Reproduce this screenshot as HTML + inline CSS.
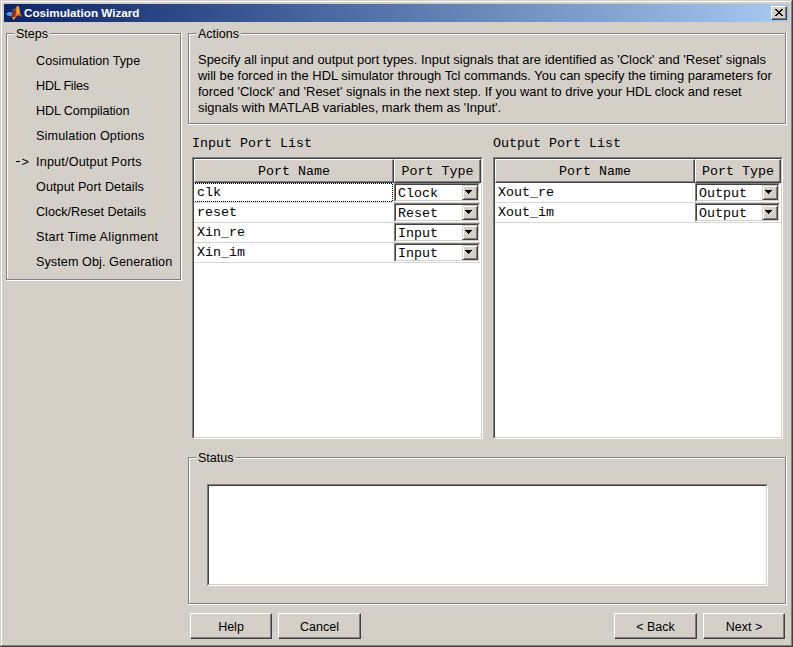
<!DOCTYPE html>
<html><head><meta charset="utf-8">
<style>
*{box-sizing:border-box;margin:0;padding:0}
html,body{width:793px;height:647px;overflow:hidden;background:#d4d0c8}
body{position:relative;font-family:"Liberation Sans",sans-serif;color:#000}
.a{position:absolute}
.t{position:absolute;white-space:pre;line-height:16px}
.m{font-family:"Liberation Mono",monospace}
.etchG{position:absolute;border:1px solid #808080;box-shadow:inset 1px 1px 0 #fff}
.etchW{position:absolute;border:1px solid #fff}
.lg{position:absolute;background:#d4d0c8;white-space:pre;font-size:12.5px;line-height:16px}
.btn{position:absolute;padding-top:2px;background:#d4d0c8;border-top:1px solid #fff;border-left:1px solid #fff;border-right:1px solid #404040;border-bottom:1px solid #404040;box-shadow:inset -1px -1px 0 #808080;font-size:12.5px;text-align:center;line-height:16px}
.sunk{position:absolute;background:#fff;border-top:1px solid #808080;border-left:1px solid #808080;border-right:1px solid #fff;border-bottom:1px solid #fff}
.sunk2{position:absolute;inset:0;border-top:1px solid #404040;border-left:1px solid #404040;border-right:1px solid #d4d0c8;border-bottom:1px solid #d4d0c8}
</style></head><body>
<!-- window frame -->
<div class="a" style="left:1px;top:1px;width:790px;height:1px;background:#fff"></div>
<div class="a" style="left:1px;top:1px;width:1px;height:644px;background:#fff"></div>
<div class="a" style="left:791px;top:1px;width:1px;height:645px;background:#808080"></div>
<div class="a" style="left:1px;top:645px;width:791px;height:1px;background:#808080"></div>
<div class="a" style="left:792px;top:0;width:1px;height:647px;background:#404040"></div>
<div class="a" style="left:0;top:646px;width:793px;height:1px;background:#404040"></div>

<!-- title bar -->
<div class="a" style="left:4px;top:4px;width:785px;height:18px;background:linear-gradient(to right,#0a246a,#a6caf0)"></div>
<svg class="a" style="left:4px;top:4px" width="20" height="18" viewBox="0 0 20 18">
  <polygon points="2,10 4.5,8 8,8.2 8.5,11.5 6,12.2 3.5,11.5" fill="#4a9ae0"/>
  <polygon points="7.5,6.5 9.5,4.2 10.5,5.5 9,7.5" fill="#1f6cb8" opacity="0.8"/>
  <polygon points="13,2 15,2.5 16.5,10 18.2,13 15,11.2 13,12 9.8,15.8 7.5,12 9.5,7.5 11.5,4" fill="#e06a1a"/>
  <polygon points="9.5,7.5 11.5,4 12,9 10.5,13 9.5,15.5 7.5,12" fill="#9a2210"/>
  <polygon points="13,2 15,2.5 15.5,9.5 13,11.5 12.5,5" fill="#f0a030"/>
  <polygon points="8.5,13.2 10.8,13.3 9.5,15.9" fill="#ffcc30"/>
</svg>
<div class="t" style="left:24px;top:4px;font-weight:bold;font-size:11.7px;color:#fff;line-height:18px">Cosimulation Wizard</div>
<!-- close button -->
<div class="a" style="left:771px;top:6px;width:16px;height:14px;background:#d4d0c8;border-top:1px solid #fff;border-left:1px solid #fff;border-right:1px solid #404040;border-bottom:1px solid #404040;box-shadow:inset -1px -1px 0 #808080"></div>
<svg class="a" style="left:771px;top:6px" width="16" height="14" viewBox="0 0 16 14">
  <path d="M4,3h1v1h-1zM5,3h1v1h-1zM10,3h1v1h-1zM11,3h1v1h-1zM5,4h1v1h-1zM6,4h1v1h-1zM9,4h1v1h-1zM10,4h1v1h-1zM6,5h1v1h-1zM7,5h1v1h-1zM8,5h1v1h-1zM9,5h1v1h-1zM7,6h1v1h-1zM8,6h1v1h-1zM6,7h1v1h-1zM7,7h1v1h-1zM8,7h1v1h-1zM9,7h1v1h-1zM5,8h1v1h-1zM6,8h1v1h-1zM9,8h1v1h-1zM10,8h1v1h-1zM4,9h1v1h-1zM5,9h1v1h-1zM10,9h1v1h-1zM11,9h1v1h-1z" fill="#000"/>
</svg>

<!-- Steps group -->
<div class="etchW" style="left:6px;top:33px;width:176px;height:248px"></div>
<div class="etchG" style="left:6px;top:33px;width:175px;height:247px"></div>
<div class="lg" style="left:14px;top:26px;padding:0 2px 0 2px">Steps</div>
<div class="t" style="left:36px;top:53px;font-size:12.6px;letter-spacing:0.050px">Cosimulation Type</div>
<div class="t" style="left:36px;top:78px;font-size:12.6px;letter-spacing:-0.212px">HDL Files</div>
<div class="t" style="left:36px;top:103px;font-size:12.6px;letter-spacing:-0.093px">HDL Compilation</div>
<div class="t" style="left:36px;top:128px;font-size:12.6px;letter-spacing:0.147px">Simulation Options</div>
<div class="a" style="left:16px;top:161px;width:4px;height:1px;background:#000"></div>
<div class="t" style="left:21.5px;top:154px;font-size:12.6px">&gt;</div>
<div class="t" style="left:36px;top:154px;font-size:12.6px;letter-spacing:0.194px">Input/Output Ports</div>
<div class="t" style="left:36px;top:179px;font-size:12.6px;letter-spacing:0.083px">Output Port Details</div>
<div class="t" style="left:36px;top:204px;font-size:12.6px;letter-spacing:0.006px">Clock/Reset Details</div>
<div class="t" style="left:36px;top:229px;font-size:12.6px;letter-spacing:0.311px">Start Time Alignment</div>
<div class="t" style="left:36px;top:254px;font-size:12.6px;letter-spacing:0.086px">System Obj. Generation</div>

<!-- Actions group -->
<div class="etchW" style="left:188px;top:33px;width:599px;height:92px"></div>
<div class="etchG" style="left:188px;top:33px;width:598px;height:91px"></div>
<div class="lg" style="left:196px;top:26px;padding:0 2px">Actions</div>
<div class="t" style="left:198px;top:52px;font-size:12.95px;line-height:16px">Specify all input and output port types. Input signals that are identified as 'Clock' and 'Reset' signals
will be forced in the HDL simulator through Tcl commands. You can specify the timing parameters for
forced 'Clock' and 'Reset' signals in the next step. If you want to drive your HDL clock and reset
signals with MATLAB variables, mark them as 'Input'.</div>

<!-- Input Port List -->
<div class="t m" style="left:192px;top:136px;font-size:13.33px">Input Port List</div>
<div class="sunk" style="left:192px;top:157px;width:291px;height:282px"><div class="sunk2"></div></div>
<!-- header -->
<div class="a" style="left:194px;top:159px;width:200px;height:24px;background:#d4d0c8;border-top:1px solid #fff;border-left:1px solid #fff;border-right:1px solid #404040;border-bottom:1px solid #404040;box-shadow:inset -1px -1px 0 #808080"></div>
<div class="t m" style="left:194px;top:164px;width:200px;text-align:center;font-size:13.33px">Port Name</div>
<div class="a" style="left:394px;top:159px;width:87px;height:24px;background:#d4d0c8;border-top:1px solid #fff;border-left:1px solid #fff;border-right:1px solid #404040;border-bottom:1px solid #404040;box-shadow:inset -1px -1px 0 #808080"></div>
<div class="t m" style="left:394px;top:164px;width:87px;text-align:center;font-size:13.33px">Port Type</div>

<!-- Output Port List -->
<div class="t m" style="left:493px;top:136px;font-size:13.33px">Output Port List</div>
<div class="sunk" style="left:493px;top:157px;width:290px;height:282px"><div class="sunk2"></div></div>
<div class="a" style="left:495px;top:159px;width:200px;height:24px;background:#d4d0c8;border-top:1px solid #fff;border-left:1px solid #fff;border-right:1px solid #404040;border-bottom:1px solid #404040;box-shadow:inset -1px -1px 0 #808080"></div>
<div class="t m" style="left:495px;top:164px;width:200px;text-align:center;font-size:13.33px">Port Name</div>
<div class="a" style="left:695px;top:159px;width:86px;height:24px;background:#d4d0c8;border-top:1px solid #fff;border-left:1px solid #fff;border-right:1px solid #404040;border-bottom:1px solid #404040;box-shadow:inset -1px -1px 0 #808080"></div>
<div class="t m" style="left:695px;top:164px;width:86px;text-align:center;font-size:13.33px">Port Type</div>

<!-- ROWS -->
<div class="a" style="left:194px;top:202px;width:286px;height:1px;background:#d6d6d6"></div>
<div class="t m" style="left:197px;top:186px;font-size:13.33px;line-height:13px">clk</div>
<div class="sunk" style="left:394px;top:183px;width:86px;height:19px"><div class="sunk2"></div></div>
<div class="t m" style="left:398px;top:187px;font-size:13.33px;line-height:13px">Clock</div>
<div class="a" style="left:462px;top:185px;width:16px;height:15px;background:#d4d0c8;border-right:1px solid #404040;border-bottom:1px solid #404040;box-shadow:inset 1px 1px 0 #fff,inset -1px -1px 0 #808080;border-left:1px solid #d4d0c8;border-top:1px solid #d4d0c8"></div>
<svg class="a" style="left:465px;top:190px" width="7" height="4"><path d="M0,0h7v1h-1v1h-1v1h-1v1h-1v-1h-1v-1h-1v-1h-1z" fill="#000"/></svg>
<div class="a" style="left:194px;top:222px;width:286px;height:1px;background:#d6d6d6"></div>
<div class="t m" style="left:197px;top:206px;font-size:13.33px;line-height:13px">reset</div>
<div class="sunk" style="left:394px;top:203px;width:86px;height:19px"><div class="sunk2"></div></div>
<div class="t m" style="left:398px;top:207px;font-size:13.33px;line-height:13px">Reset</div>
<div class="a" style="left:462px;top:205px;width:16px;height:15px;background:#d4d0c8;border-right:1px solid #404040;border-bottom:1px solid #404040;box-shadow:inset 1px 1px 0 #fff,inset -1px -1px 0 #808080;border-left:1px solid #d4d0c8;border-top:1px solid #d4d0c8"></div>
<svg class="a" style="left:465px;top:210px" width="7" height="4"><path d="M0,0h7v1h-1v1h-1v1h-1v1h-1v-1h-1v-1h-1v-1h-1z" fill="#000"/></svg>
<div class="a" style="left:194px;top:242px;width:286px;height:1px;background:#d6d6d6"></div>
<div class="t m" style="left:197px;top:226px;font-size:13.33px;line-height:13px">Xin_re</div>
<div class="sunk" style="left:394px;top:223px;width:86px;height:19px"><div class="sunk2"></div></div>
<div class="t m" style="left:398px;top:227px;font-size:13.33px;line-height:13px">Input</div>
<div class="a" style="left:462px;top:225px;width:16px;height:15px;background:#d4d0c8;border-right:1px solid #404040;border-bottom:1px solid #404040;box-shadow:inset 1px 1px 0 #fff,inset -1px -1px 0 #808080;border-left:1px solid #d4d0c8;border-top:1px solid #d4d0c8"></div>
<svg class="a" style="left:465px;top:230px" width="7" height="4"><path d="M0,0h7v1h-1v1h-1v1h-1v1h-1v-1h-1v-1h-1v-1h-1z" fill="#000"/></svg>
<div class="a" style="left:194px;top:262px;width:286px;height:1px;background:#d6d6d6"></div>
<div class="t m" style="left:197px;top:246px;font-size:13.33px;line-height:13px">Xin_im</div>
<div class="sunk" style="left:394px;top:243px;width:86px;height:19px"><div class="sunk2"></div></div>
<div class="t m" style="left:398px;top:247px;font-size:13.33px;line-height:13px">Input</div>
<div class="a" style="left:462px;top:245px;width:16px;height:15px;background:#d4d0c8;border-right:1px solid #404040;border-bottom:1px solid #404040;box-shadow:inset 1px 1px 0 #fff,inset -1px -1px 0 #808080;border-left:1px solid #d4d0c8;border-top:1px solid #d4d0c8"></div>
<svg class="a" style="left:465px;top:250px" width="7" height="4"><path d="M0,0h7v1h-1v1h-1v1h-1v1h-1v-1h-1v-1h-1v-1h-1z" fill="#000"/></svg>
<div class="a" style="left:195px;top:183px;width:198px;height:1px;background:repeating-linear-gradient(to right,#000 0 1px,transparent 1px 2px)"></div>
<div class="a" style="left:195px;top:201px;width:198px;height:1px;background:repeating-linear-gradient(to right,#000 0 1px,transparent 1px 2px)"></div>
<div class="a" style="left:392px;top:184px;width:1px;height:17px;background:repeating-linear-gradient(to bottom,#000 0 1px,transparent 1px 2px)"></div>
<div class="a" style="left:495px;top:202px;width:285px;height:1px;background:#d6d6d6"></div>
<div class="t m" style="left:498px;top:186px;font-size:13.33px;line-height:13px">Xout_re</div>
<div class="sunk" style="left:695px;top:183px;width:85px;height:19px"><div class="sunk2"></div></div>
<div class="t m" style="left:699px;top:187px;font-size:13.33px;line-height:13px">Output</div>
<div class="a" style="left:762px;top:185px;width:16px;height:15px;background:#d4d0c8;border-right:1px solid #404040;border-bottom:1px solid #404040;box-shadow:inset 1px 1px 0 #fff,inset -1px -1px 0 #808080;border-left:1px solid #d4d0c8;border-top:1px solid #d4d0c8"></div>
<svg class="a" style="left:765px;top:190px" width="7" height="4"><path d="M0,0h7v1h-1v1h-1v1h-1v1h-1v-1h-1v-1h-1v-1h-1z" fill="#000"/></svg>
<div class="a" style="left:495px;top:222px;width:285px;height:1px;background:#d6d6d6"></div>
<div class="t m" style="left:498px;top:206px;font-size:13.33px;line-height:13px">Xout_im</div>
<div class="sunk" style="left:695px;top:203px;width:85px;height:19px"><div class="sunk2"></div></div>
<div class="t m" style="left:699px;top:207px;font-size:13.33px;line-height:13px">Output</div>
<div class="a" style="left:762px;top:205px;width:16px;height:15px;background:#d4d0c8;border-right:1px solid #404040;border-bottom:1px solid #404040;box-shadow:inset 1px 1px 0 #fff,inset -1px -1px 0 #808080;border-left:1px solid #d4d0c8;border-top:1px solid #d4d0c8"></div>
<svg class="a" style="left:765px;top:210px" width="7" height="4"><path d="M0,0h7v1h-1v1h-1v1h-1v1h-1v-1h-1v-1h-1v-1h-1z" fill="#000"/></svg>

<!-- Status group -->
<div class="etchW" style="left:188px;top:457px;width:599px;height:148px"></div>
<div class="etchG" style="left:188px;top:457px;width:598px;height:147px"></div>
<div class="lg" style="left:196px;top:450px;padding:0 3px 0 2px">Status</div>
<div class="sunk" style="left:207px;top:484px;width:561px;height:102px"><div class="sunk2"></div></div>

<!-- Buttons -->
<div class="btn" style="left:190px;top:613px;width:82px;height:26px;line-height:23px">Help</div>
<div class="btn" style="left:278px;top:613px;width:83px;height:26px;line-height:23px">Cancel</div>
<div class="btn" style="left:614px;top:613px;width:83px;height:26px;line-height:23px">&lt; Back</div>
<div class="btn" style="left:703px;top:613px;width:82px;height:26px;line-height:23px">Next &gt;</div>
</body></html>
